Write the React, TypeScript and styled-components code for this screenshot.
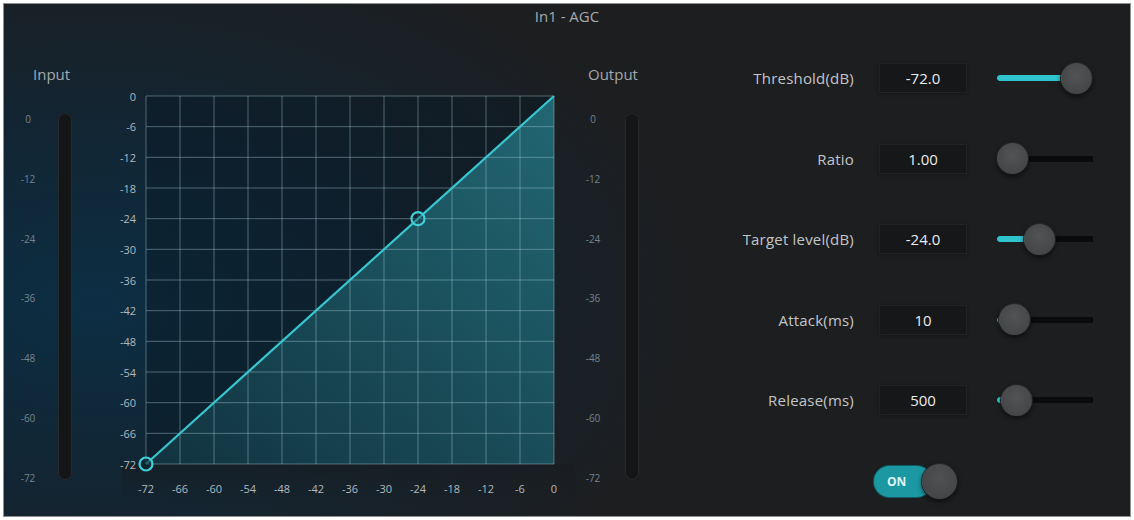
import React from "react";
import styled, { createGlobalStyle } from "styled-components";

const GlobalStyle = createGlobalStyle`
  html, body { margin: 0; padding: 0; background: #ffffff; }
  body { font-family: "Open Sans", "Liberation Sans", sans-serif; }
  * { box-sizing: border-box; }
`;

const Page = styled.div`
  width: 1134px;
  height: 520px;
  padding: 3px;
`;

const Panel = styled.div`
  height: 100%;
  border: 1px solid #8d8f92;
  display: flex;
  flex-direction: column;
  overflow: hidden;
  background:
    radial-gradient(ellipse 600px 380px at 90px 300px,
      rgba(11, 47, 70, 0.95) 0%,
      rgba(14, 40, 58, 0.75) 45%,
      rgba(29, 30, 32, 0) 100%),
    #1d1e20;
`;

const Title = styled.div`
  height: 24px;
  line-height: 24px;
  text-align: center;
  font-size: 15px;
  color: #a6a9ac;
`;

const Body = styled.div`
  flex: 1;
  display: flex;
  align-items: flex-start;
`;

/* ---------- level meters ---------- */

const MeterColumn = styled.div<{ $ml: number }>`
  display: flex;
  flex-direction: column;
  margin-left: ${(p) => p.$ml}px;
  margin-top: 38px;
`;

const MeterLabel = styled.div<{ $indent: number }>`
  height: 16px;
  line-height: 16px;
  padding-left: ${(p) => p.$indent}px;
  font-size: 15px;
  color: #a3a9ae;
`;

const MeterBody = styled.div<{ $gap: number }>`
  display: flex;
  gap: ${(p) => p.$gap}px;
  margin-top: 31px;
`;

const Scale = styled.div`
  width: 30px;
  height: 371px;
  display: flex;
  flex-direction: column;
  justify-content: space-between;
  text-align: center;
  font-size: 10px;
  line-height: 12px;
  color: #74838e;
`;

const Bar = styled.div`
  width: 14px;
  height: 367px;
  border-radius: 7px;
  background: #141516;
  box-shadow: inset 0 0 0 1px #28292b;
`;

const meterMarks = ["0", "-12", "-24", "-36", "-48", "-60", "-72"];

function Meter({ label, ml, indent, gap }: { label: string; ml: number; indent: number; gap: number }) {
  return (
    <MeterColumn $ml={ml}>
      <MeterLabel $indent={indent}>{label}</MeterLabel>
      <MeterBody $gap={gap}>
        <Scale>
          {meterMarks.map((m) => (
            <span key={m}>{m}</span>
          ))}
        </Scale>
        <Bar />
      </MeterBody>
    </MeterColumn>
  );
}

/* ---------- transfer curve ---------- */

const ChartFrame = styled.div`
  width: 475px;
  height: 420px;
  margin-left: 28px;
  margin-top: 58px;
  svg { display: block; }
`;

const PL = 46;
const PT = 10;
const PW = 408;
const PH = 368;
const ticks = Array.from({ length: 13 }, (_, i) => i);

function px(db: number) {
  return PL + ((db + 72) / 72) * PW;
}
function py(db: number) {
  return PT + (-db / 72) * PH;
}

function CurveChart() {
  return (
    <ChartFrame>
      <svg width="475" height="420" viewBox="0 0 475 420">
        <defs>
          <linearGradient id="curveFill" x1="0" y1="1" x2="1" y2="0">
            <stop offset="0" stopColor="#11333f" />
            <stop offset="1" stopColor="#216773" />
          </linearGradient>
          <linearGradient id="axisBand" x1="0" y1="0" x2="0" y2="1">
            <stop offset="0" stopColor="rgba(24,27,30,0.55)" />
            <stop offset="1" stopColor="rgba(24,27,30,0)" />
          </linearGradient>
        </defs>
        <rect x="22" y={PT + PH} width="453" height={420 - PT - PH} fill="url(#axisBand)" />
        <rect x={PL} y={PT} width={PW} height={PH} fill="rgba(8,24,35,0.45)" />
        <polygon
          points={`${PL},${PT + PH} ${PL + PW},${PT} ${PL + PW},${PT + PH}`}
          fill="url(#curveFill)"
        />
        {ticks.map((i) => (
          <line
            key={`v${i}`}
            x1={PL + (i * PW) / 12}
            x2={PL + (i * PW) / 12}
            y1={PT}
            y2={PT + PH}
            stroke="rgba(170,205,215,0.42)"
            strokeWidth="1"
          />
        ))}
        {ticks.map((i) => (
          <line
            key={`h${i}`}
            x1={PL}
            x2={PL + PW}
            y1={PT + (i * PH) / 12}
            y2={PT + (i * PH) / 12}
            stroke="rgba(170,205,215,0.42)"
            strokeWidth="1"
          />
        ))}
        <line x1={px(-72)} y1={py(-72)} x2={px(0)} y2={py(0)} stroke="#37c6d0" strokeWidth="2.2" />
        <circle cx={px(-72)} cy={py(-72)} r="6.5" fill="rgba(10,40,50,0.6)" stroke="#3fd0da" strokeWidth="2.2" />
        <circle cx={px(-24)} cy={py(-24)} r="6.5" fill="rgba(10,40,50,0.3)" stroke="#3fd0da" strokeWidth="2.2" />
        <g fontFamily="'Open Sans', 'Liberation Sans', sans-serif" fontSize="11" fill="#b0b9bf">
          {ticks.map((i) => (
            <text key={`yl${i}`} x={36} y={PT + (i * PH) / 12} textAnchor="end" dominantBaseline="central">
              {i === 0 ? "0" : `-${i * 6}`}
            </text>
          ))}
          {ticks.map((i) => (
            <text key={`xl${i}`} x={PL + (i * PW) / 12} y={402} textAnchor="middle" dominantBaseline="central">
              {i === 12 ? "0" : `-${72 - i * 6}`}
            </text>
          ))}
        </g>
      </svg>
    </ChartFrame>
  );
}

/* ---------- parameter controls ---------- */

const Controls = styled.div`
  margin-left: 60px;
  margin-top: 35px;
  display: flex;
  flex-direction: column;
  gap: 50.5px;
`;

const Row = styled.div`
  height: 30px;
  display: flex;
  align-items: center;
`;

const ParamLabel = styled.div`
  width: 155px;
  text-align: right;
  font-size: 15px;
  letter-spacing: 0.2px;
  color: #c2c5c8;
`;

const ValueBox = styled.div`
  width: 88px;
  height: 30px;
  margin-left: 25px;
  background: #161719;
  border: 1px solid #212224;
  box-shadow: 0 1px 3px rgba(0, 0, 0, 0.35);
  display: flex;
  align-items: center;
  justify-content: center;
  font-size: 15px;
  font-weight: 500;
  color: #ebebeb;
`;

const Slider = styled.div`
  position: relative;
  width: 96px;
  height: 31px;
  margin-left: 30px;
  display: flex;
  align-items: center;
`;

const Track = styled.div`
  width: 100%;
  height: 6px;
  background: #0b0b0c;
  display: flex;
`;

const Fill = styled.div`
  height: 100%;
  border-radius: 3px;
  background: #2fc4ce;
`;

const Thumb = styled.div`
  position: absolute;
  top: 0;
  width: 31px;
  height: 31px;
  border-radius: 50%;
  background: radial-gradient(circle at 50% 40%, #525355 0%, #454648 70%, #3d3e40 100%);
  box-shadow: 0 2px 5px rgba(0, 0, 0, 0.7), 0 0 0 1px #2b2c2e;
`;

const ToggleRow = styled.div`
  margin-top: -2px;
  padding-left: 175px;
`;

const Toggle = styled.div`
  position: relative;
  width: 83px;
  height: 35px;
  display: flex;
  align-items: center;
`;

const ToggleTrack = styled.div`
  width: 58px;
  height: 31px;
  border-radius: 16px;
  background: #1b98a2;
  box-shadow: 0 0 0 1px #0f5a61;
  display: flex;
  align-items: center;
  padding-left: 13px;
  font-size: 12px;
  font-weight: 700;
  color: #dff5f7;
`;

const ToggleKnob = styled.div`
  position: absolute;
  left: 48px;
  top: 0;
  width: 35px;
  height: 35px;
  border-radius: 50%;
  background: radial-gradient(circle at 50% 40%, #505153 0%, #454648 70%, #3c3d3f 100%);
  box-shadow: 0 2px 5px rgba(0, 0, 0, 0.7), 0 0 0 1px #2a2b2d;
`;

type Param = { label: string; value: string; pos: number };

const params: Param[] = [
  { label: "Threshold(dB)", value: "-72.0", pos: 0.98 },
  { label: "Ratio", value: "1.00", pos: 0 },
  { label: "Target level(dB)", value: "-24.0", pos: 0.415 },
  { label: "Attack(ms)", value: "10", pos: 0.03 },
  { label: "Release(ms)", value: "500", pos: 0.06 },
];

const TRAVEL = 96 - 31;

function ParamRow({ p }: { p: Param }) {
  const left = p.pos * TRAVEL;
  return (
    <Row>
      <ParamLabel>{p.label}</ParamLabel>
      <ValueBox>{p.value}</ValueBox>
      <Slider>
        <Track>
          <Fill style={{ width: `${left + 15.5}px` }} />
        </Track>
        <Thumb style={{ left: `${left}px` }} />
      </Slider>
    </Row>
  );
}

export default function App() {
  return (
    <>
      <GlobalStyle />
      <Page>
        <Panel>
          <Title>In1 - AGC</Title>
          <Body>
            <Meter label="Input" ml={9} indent={20} gap={15} />
            <CurveChart />
            <Meter label="Output" ml={3} indent={10} gap={17} />
            <Controls>
              {params.map((p) => (
                <ParamRow key={p.label} p={p} />
              ))}
              <ToggleRow>
                <Toggle>
                  <ToggleTrack>ON</ToggleTrack>
                  <ToggleKnob />
                </Toggle>
              </ToggleRow>
            </Controls>
          </Body>
        </Panel>
      </Page>
    </>
  );
}
